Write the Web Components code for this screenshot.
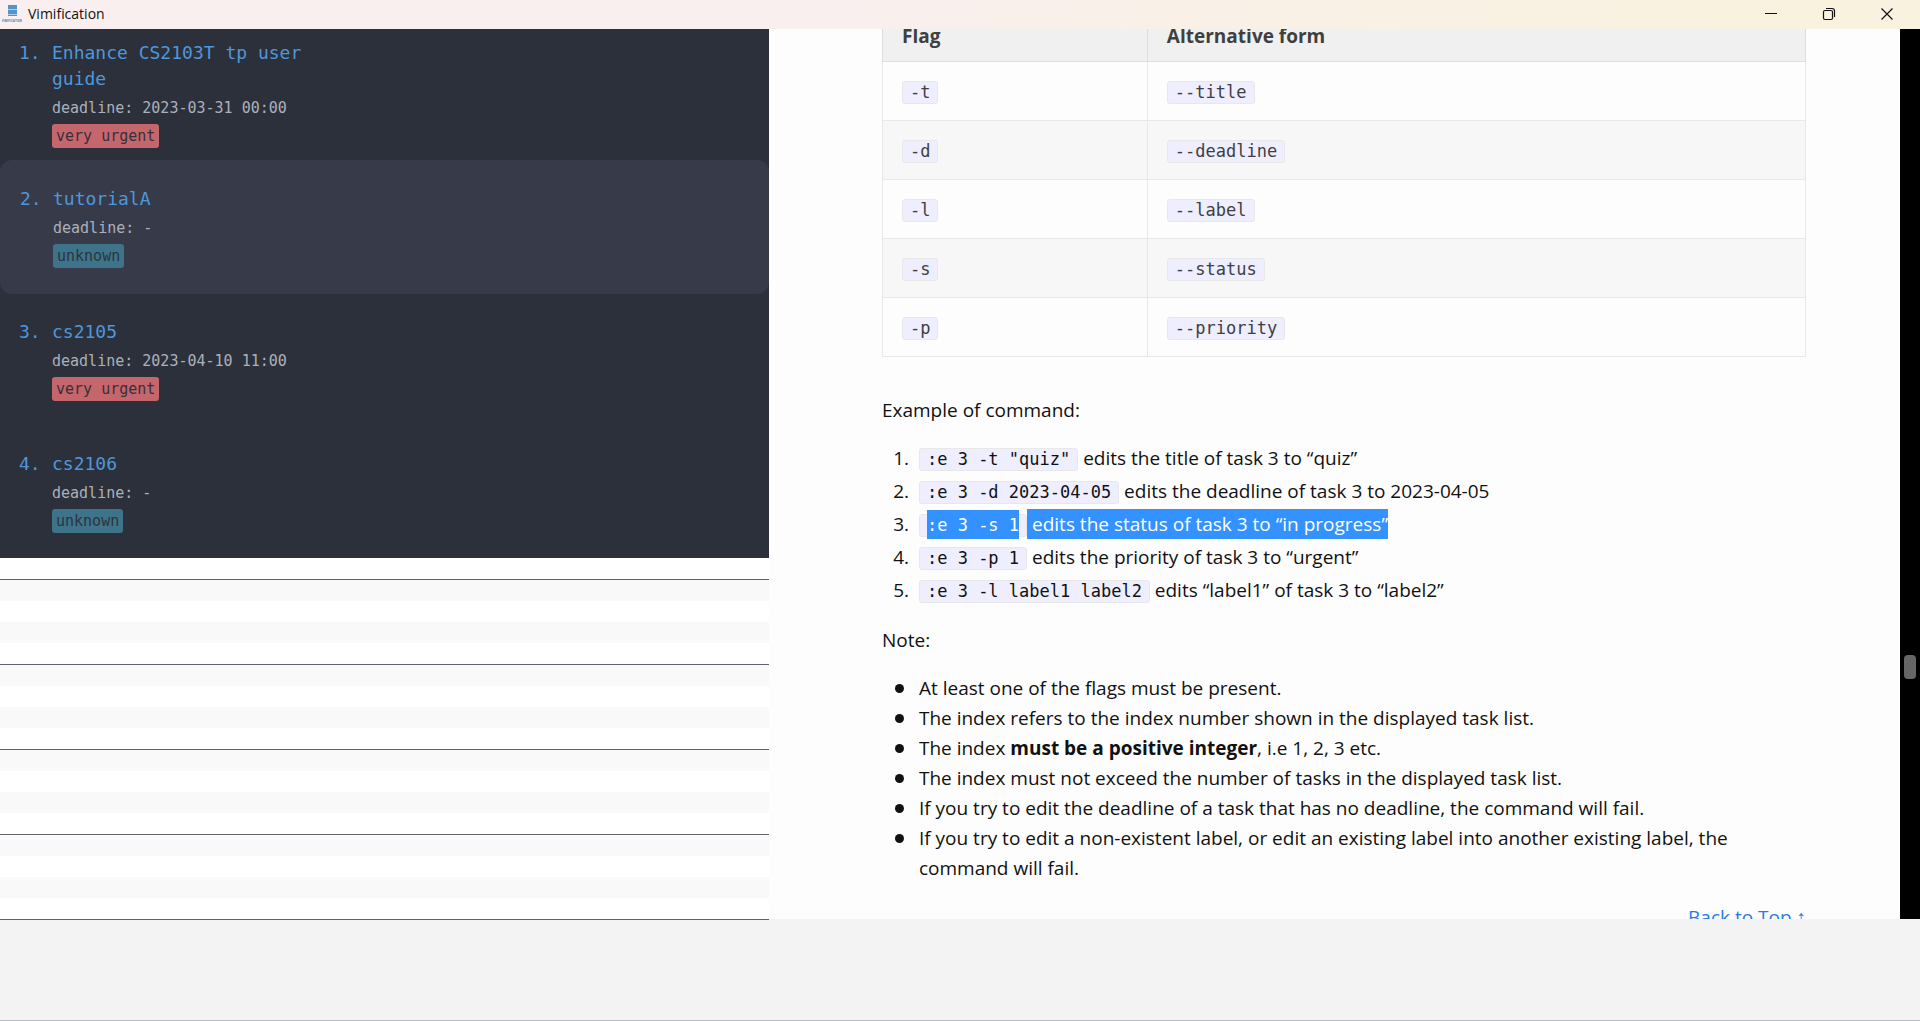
<!DOCTYPE html>
<html lang="en">
<head>
<meta charset="utf-8">
<title>Vimification</title>
<style>
  html, body { margin: 0; height: 100%; }
  body { overflow: hidden; font-family: "Open Sans", "Noto Sans", sans-serif; --mono: "DejaVu Sans Mono", "Liberation Mono", monospace; }
</style>
</head>
<body>
<app-window></app-window>
<script>
const define = (name, html, setup) => {
  const template = document.createElement('template');
  template.innerHTML = html;
  customElements.define(name, class extends HTMLElement {
    connectedCallback() {
      if (this.shadowRoot) return;
      this.attachShadow({ mode: 'open' }).append(template.content.cloneNode(true));
      if (setup) setup(this, this.shadowRoot);
    }
  });
};

define('title-bar', `
<style>
  :host { display: flex; align-items: center; height: 29px; flex: none; padding: 0 4px 2px 2px; box-sizing: border-box; position: relative; z-index: 2;
    background: linear-gradient(90deg, #f9eff0 0%, #f9efee 45%, #f9f1e5 70%, #f9f2df 90%); color: #111; }
  .logo { width: 20px; height: 20px; margin-right: 6px; }
  .name { flex: 1; font-size: 14px; line-height: 20px; }
  button { width: 58px; height: 27px; padding: 0; border: 0; background: none; display: flex; align-items: center; justify-content: center; }
  button svg { width: 14px; height: 14px; fill: none; stroke: #111; }
</style>
<svg class="logo" viewBox="0 0 20 20" aria-hidden="true">
  <g fill="#5296c8"><rect x="6" y="1" width="9" height="4"/><rect x="6" y="6" width="9" height="4"/><rect x="6" y="11" width="9" height="1"/></g>
  <path d="M6 5.5h9M6 10.5h9" stroke="#a9cde4"/>
  <text x="10" y="18" font-size="3" font-weight="700" text-anchor="middle" fill="#537f9d">VIMIFICATION</text>
</svg>
<span class="name"><slot></slot></span>
<button aria-label="Minimize"><svg viewBox="0 0 14 14"><path d="M1 6.5h12"/></svg></button>
<button aria-label="Restore"><svg viewBox="0 0 14 14"><rect x="1.5" y="3.5" width="9" height="9" rx="1.5" stroke-width="1.2"/><path d="M4 1.5h6a2.5 2.5 0 0 1 2.5 2.5v6" stroke-width="1.2"/></svg></button>
<button aria-label="Close"><svg viewBox="0 0 14 14"><path d="M1.5 1.5l11 11M12.5 1.5l-11 11" stroke-width="1.2"/></svg></button>
`);

define('task-item', `
<style>
  :host { display: flex; align-items: center; box-sizing: border-box; height: 132px; padding-left: 19px; font-family: var(--mono); font-size: 18px; line-height: 26px; color: #4f97dc; }
  :host([selected]) { height: 134px; padding-left: 20px; background: #373b49; border-radius: 12px; }
  .row { display: flex; }
  .num { width: 33px; }
  .body { display: flex; flex-direction: column; align-items: flex-start; gap: 2px; }
  .title { max-width: 270px; }
  .due { font-size: 15px; line-height: 28px; color: #abb0bc; }
  .badge { font-size: 15px; line-height: 24px; padding: 0 4px; border-radius: 3px; background: #3d7489; color: #2b3440; }
  .badge.urgent { background: #c5666d; color: #37303b; }
</style>
<div class="row">
  <span class="num"></span>
  <div class="body"><span class="title"><slot></slot></span><span class="due"></span><span class="badge"></span></div>
</div>
`, (el, root) => {
  root.querySelector('.num').textContent = el.getAttribute('index') + '.';
  root.querySelector('.due').textContent = 'deadline: ' + el.getAttribute('deadline');
  const badge = root.querySelector('.badge');
  badge.textContent = el.getAttribute('priority');
  badge.classList.toggle('urgent', badge.textContent === 'very urgent');
});

define('task-list', `
<style>
  :host { display: block; background: #2c303a; flex: none; margin-top: -1px; }
</style>
<slot></slot>
`);

define('empty-rows', `
<style>
  :host { display: block; flex: none; background: #fff; }
  div { height: 21px; }
  div.alt { background: #f9f9f9; }
  div.rule { border-bottom: 1px solid #60636b; }
</style>
`, (el, root) => {
  const total = Number(el.getAttribute('count'));
  for (let i = 0; i < total; i++) {
    const row = document.createElement('div');
    if (i % 2) row.classList.add('alt');
    if (i % 4 === 0) row.classList.add('rule');
    root.append(row);
  }
});

define('cmd-code', `
<style>
  :host { display: inline-block; font-family: var(--mono); font-size: 17px; line-height: 21px; padding: 0 7px; border: 1px solid #e8e8e8; border-radius: 3px; background: #eef; }
  :host([selected]) { color: #fff; }
  :host([selected]) span { background: #3392ff; padding: 5px 0 4px; }
</style>
<span><slot></slot></span>
`);

define('flag-table', `
<style>
  :host { display: block; color: #3f3f3f; }
  table { width: 100%; border-collapse: collapse; table-layout: fixed; font-size: 19px; line-height: 30px; border: 1px solid #e8e8e8; }
  col.flag { width: 28.7%; }
  th, td { text-align: left; height: 58px; padding: 0 19px; border: 1px solid #e8e8e8; }
  th { height: 50px; background: #f0f0f0; border-color: #dedede; font-weight: 700; }
  tbody tr:nth-child(even) { background: #f7f7f7; }
</style>
<table>
  <colgroup><col class="flag"><col></colgroup>
  <thead><tr><th>Flag</th><th>Alternative form</th></tr></thead>
  <tbody>
    <tr><td><cmd-code>-t</cmd-code></td><td><cmd-code>--title</cmd-code></td></tr>
    <tr><td><cmd-code>-d</cmd-code></td><td><cmd-code>--deadline</cmd-code></td></tr>
    <tr><td><cmd-code>-l</cmd-code></td><td><cmd-code>--label</cmd-code></td></tr>
    <tr><td><cmd-code>-s</cmd-code></td><td><cmd-code>--status</cmd-code></td></tr>
    <tr><td><cmd-code>-p</cmd-code></td><td><cmd-code>--priority</cmd-code></td></tr>
  </tbody>
</table>
`);

define('guide-page', `
<style>
  :host { display: block; flex: 1; min-width: 0; overflow: hidden; background: #fdfdfd; color: #111; font-size: 19px; line-height: 30px; }
  main { display: flex; flex-direction: column; margin: -19px 94px 0 113px; }
  p { margin: 0; }
  .example { margin-top: 38px; }
  ol, ul { margin: 0; padding-left: 37px; }
  ol { margin-top: 17px; margin-bottom: 18px; line-height: 33px; }
  ol li { height: 33px; }
  ol li::marker { content: counter(list-item) ".\\00a0\\00a0"; }
  ul { margin-top: 18px; margin-bottom: 19px; list-style: none; }
  ul li::before { content: ""; display: inline-block; width: 9px; height: 9px; border-radius: 50%; background: currentColor; margin: 0 15px 2px -24px; vertical-align: middle; }
  .sel { white-space: pre-wrap; color: #fff; background: #3392ff; padding: 2px 0; }
  a { align-self: flex-end; color: #2a7ae2; text-decoration: none; }
</style>
<main>
  <flag-table></flag-table>
  <p class="example">Example of command:</p>
  <ol>
    <li><cmd-code>:e 3 -t "quiz"</cmd-code> edits the title of task 3 to “quiz”</li>
    <li><cmd-code>:e 3 -d 2023-04-05</cmd-code> edits the deadline of task 3 to 2023-04-05</li>
    <li><cmd-code selected>:e 3 -s 1</cmd-code><span class="sel"> edits the status of task 3 to “in progress”</span></li>
    <li><cmd-code>:e 3 -p 1</cmd-code> edits the priority of task 3 to “urgent”</li>
    <li><cmd-code>:e 3 -l label1 label2</cmd-code> edits “label1” of task 3 to “label2”</li>
  </ol>
  <p>Note:</p>
  <ul>
    <li>At least one of the flags must be present.</li>
    <li>The index refers to the index number shown in the displayed task list.</li>
    <li>The index <strong>must be a positive integer</strong>, i.e 1, 2, 3 etc.</li>
    <li>The index must not exceed the number of tasks in the displayed task list.</li>
    <li>If you try to edit the deadline of a task that has no deadline, the command will fail.</li>
    <li>If you try to edit a non-existent label, or edit an existing label into another existing label, the command will fail.</li>
  </ul>
  <a href="#top">Back to Top ↑</a>
</main>
`);

define('scroll-track', `
<style>
  :host { display: flex; flex-direction: column; align-items: center; flex: none; width: 20px; background: #000; }
  .before { flex: 626; }
  .thumb { flex: none; width: 12px; height: 24px; border-radius: 4px; background: #666; }
  .after { flex: 240; }
</style>
<div class="before"></div><div class="thumb"></div><div class="after"></div>
`);

define('command-area', `
<style>
  :host { display: block; flex: none; height: 101px; background: #f3f3f3; border-bottom: 1px solid #a9c4c0; }
</style>
`);

define('app-window', `
<style>
  :host { display: flex; flex-direction: column; height: 100vh; }
  .panes { flex: 1; min-height: 0; display: flex; }
  .left { flex: 0 0 40.05%; min-width: 0; display: flex; flex-direction: column; position: relative; z-index: 1; }
</style>
<title-bar>Vimification</title-bar>
<div class="panes">
  <div class="left">
    <task-list>
      <task-item index="1" deadline="2023-03-31 00:00" priority="very urgent">Enhance CS2103T tp user guide</task-item>
      <task-item index="2" deadline="-" priority="unknown" selected>tutorialA</task-item>
      <task-item index="3" deadline="2023-04-10 11:00" priority="very urgent">cs2105</task-item>
      <task-item index="4" deadline="-" priority="unknown">cs2106</task-item>
    </task-list>
    <empty-rows count="17"></empty-rows>
  </div>
  <guide-page></guide-page>
  <scroll-track></scroll-track>
</div>
<command-area></command-area>
`);
</script>
</body>
</html>
